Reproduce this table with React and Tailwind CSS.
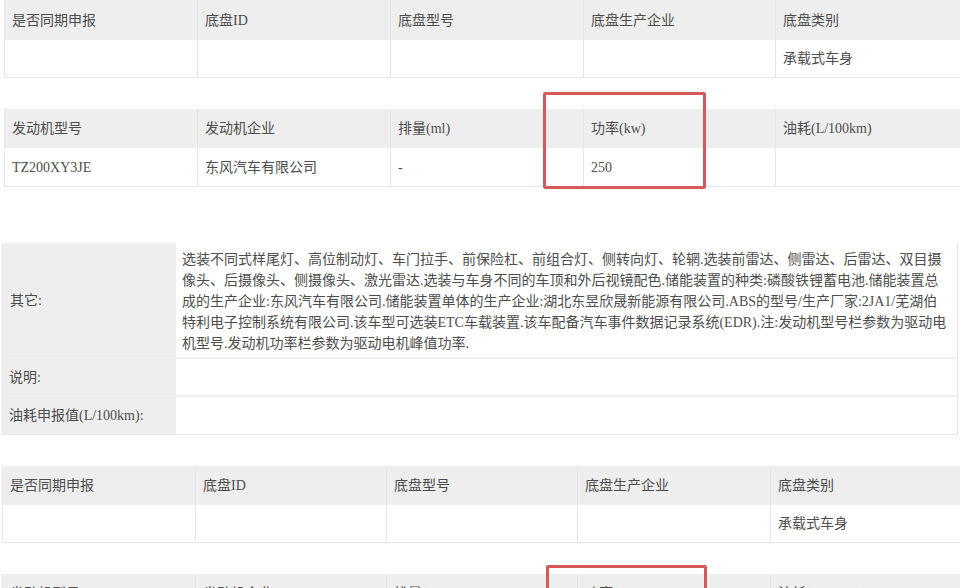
import React from 'react';

const font = { fontFamily: '"Liberation Serif", "Noto Sans CJK SC", serif' };

const chassisHead = ['是否同期申报', '底盘ID', '底盘型号', '底盘生产企业', '底盘类别'];
const chassisRow = ['', '', '', '', '承载式车身'];
const engineHead = ['发动机型号', '发动机企业', '排量(ml)', '功率(kw)', '油耗(L/100km)'];
const engineRow = ['TZ200XY3JE', '东风汽车有限公司', '-', '250', ''];

const otherLines = [
  '选装不同式样尾灯、高位制动灯、车门拉手、前保险杠、前组合灯、侧转向灯、轮辋.选装前雷达、侧雷达、后雷达、双目摄',
  '像头、后摄像头、侧摄像头、激光雷达.选装与车身不同的车顶和外后视镜配色.储能装置的种类:磷酸铁锂蓄电池.储能装置总',
  '成的生产企业:东风汽车有限公司.储能装置单体的生产企业:湖北东昱欣晟新能源有限公司.ABS的型号/生产厂家:2JA1/芜湖伯',
  '特利电子控制系统有限公司.该车型可选装ETC车载装置.该车配备汽车事件数据记录系统(EDR).注:发动机型号栏参数为驱动电',
  '机型号.发动机功率栏参数为驱动电机峰值功率.',
];

function Row({ cells, head, cols, height }) {
  return (
    <div className={`grid ${cols} ${height} ${head ? 'bg-[#eeeeee]' : 'bg-white border-b border-[#e6e6e6]'}`}>
      {cells.map((c, i) => (
        <div
          key={i}
          className={`flex items-center pl-[7px] text-[14px] text-[#4d4d4d] whitespace-nowrap overflow-hidden ${
            i < cells.length - 1 ? 'border-r border-[#e6e6e6]' : ''
          }`}
        >
          {c}
        </div>
      ))}
    </div>
  );
}

function Highlight({ className }) {
  return <div className={`absolute border-[3px] border-[#d65959] rounded-[2px] pointer-events-none ${className}`} />;
}

export default function App() {
  const wideCols = 'grid-cols-[193px_193px_193px_192px_1fr]';
  const narrowCols = 'grid-cols-[193px_191px_191px_193px_1fr]';

  return (
    <div className="w-[960px] h-[588px] overflow-hidden bg-white" style={font}>
      {/* 底盘 */}
      <div className="ml-[4px] border-l border-[#e6e6e6]">
        <Row cells={chassisHead} head cols={wideCols} height="h-[40px]" />
        <Row cells={chassisRow} cols={wideCols} height="h-[38px]" />
      </div>

      {/* 发动机 */}
      <div className="relative ml-[4px] mt-[31px] border-l border-[#e6e6e6]">
        <Row cells={engineHead} head cols={wideCols} height="h-[39px]" />
        <Row cells={engineRow} cols={wideCols} height="h-[39px]" />
        <Highlight className="left-[538px] -top-[17px] w-[163px] h-[97px]" />
      </div>

      {/* 其它 */}
      <div className="ml-[2px] mr-[2px] mt-[56px] border-l border-r border-[#e6e6e6] text-[14px] text-[#4d4d4d]">
        <div className="flex border-b-2 border-[#f0f0f0]">
          <div className="w-[173px] shrink-0 bg-[#eeeeee] flex items-center pl-[7px]">其它:</div>
          <div className="flex-1 pl-[6px] pt-[6px] pb-[3px] leading-[21px] whitespace-nowrap">
            {otherLines.map((l, i) => (
              <div key={i}>{l}</div>
            ))}
          </div>
        </div>
        <div className="flex h-[38px] border-b-2 border-[#f0f0f0]">
          <div className="w-[173px] shrink-0 bg-[#eeeeee] flex items-center pl-[6px]">说明:</div>
          <div className="flex-1" />
        </div>
        <div className="flex h-[38px] border-b border-[#e6e6e6]">
          <div className="w-[173px] shrink-0 bg-[#eeeeee] flex items-center pl-[6px]">油耗申报值(L/100km):</div>
          <div className="flex-1" />
        </div>
      </div>

      {/* 底盘 (2) */}
      <div className="ml-[2px] mt-[31px] border-l border-[#e6e6e6]">
        <Row cells={chassisHead} head cols={narrowCols} height="h-[39px]" />
        <Row cells={chassisRow} cols={narrowCols} height="h-[38px]" />
      </div>

      {/* 发动机 (2) */}
      <div className="relative ml-[2px] mt-[31px] border-l border-[#e6e6e6]">
        <Row cells={engineHead} head cols={narrowCols} height="h-[39px]" />
        <Row cells={engineRow} cols={narrowCols} height="h-[39px]" />
        <Highlight className="left-[543px] -top-[9px] w-[161px] h-[97px]" />
      </div>
    </div>
  );
}
